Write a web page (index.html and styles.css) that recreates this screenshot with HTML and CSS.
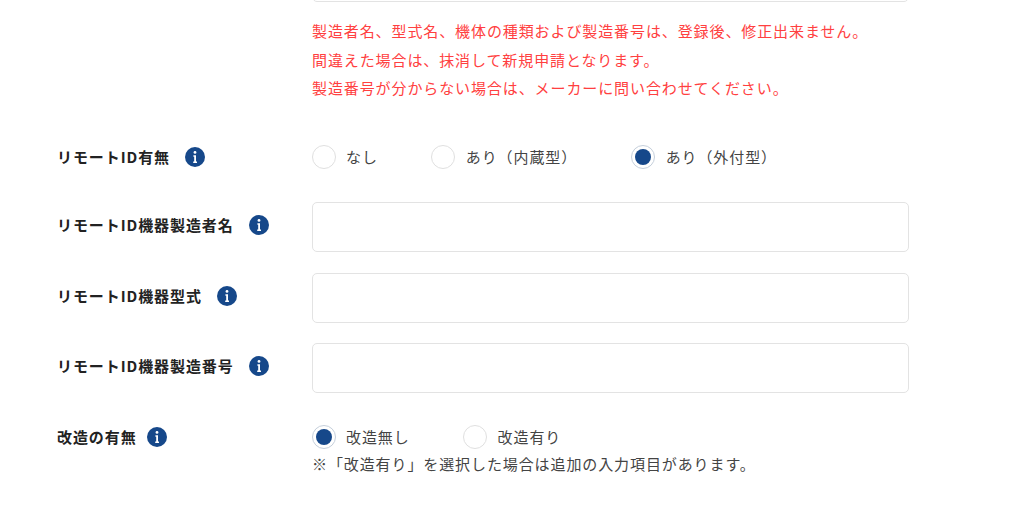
FILE: index.html
```html
<!DOCTYPE html>
<html lang="ja">
<head>
  <meta charset="UTF-8" />
  <title>機体情報</title>
  <link rel="stylesheet" href="styles.css">
</head>
<body>
  <form class="form">
    <div class="row row-top">
      <div class="label"></div>
      <div class="field">
        <input type="text" class="text-input" />
        <div class="notice">
          <p>製造者名、型式名、機体の種類および製造番号は、登録後、修正出来ません。</p>
          <p>間違えた場合は、抹消して新規申請となります。</p>
          <p>製造番号が分からない場合は、メーカーに問い合わせてください。</p>
        </div>
      </div>
    </div>

    <div class="row row-radio">
      <div class="label">
        <span>リモートID有無</span>
        <svg class="info" viewBox="0 0 20 20"><circle cx="10" cy="10" r="10" fill="#16488a"/><circle cx="10" cy="5.4" r="1.4" fill="#fff"/><path d="M8.4 8.3h2.6v6.2h1v1.5H8.2v-1.5h1v-4.7h-.8z" fill="#fff"/></svg>
      </div>
      <div class="field radios">
        <label class="radio radio-a"><span class="dot"></span>なし</label>
        <label class="radio radio-b"><span class="dot"></span>あり（内蔵型）</label>
        <label class="radio"><span class="dot checked"></span>あり（外付型）</label>
      </div>
    </div>

    <div class="row row-wide">
      <div class="label">
        <span>リモートID機器製造者名</span>
        <svg class="info" viewBox="0 0 20 20"><circle cx="10" cy="10" r="10" fill="#16488a"/><circle cx="10" cy="5.4" r="1.4" fill="#fff"/><path d="M8.4 8.3h2.6v6.2h1v1.5H8.2v-1.5h1v-4.7h-.8z" fill="#fff"/></svg>
      </div>
      <div class="field"><input type="text" class="text-input" /></div>
    </div>

    <div class="row">
      <div class="label">
        <span>リモートID機器型式</span>
        <svg class="info" viewBox="0 0 20 20"><circle cx="10" cy="10" r="10" fill="#16488a"/><circle cx="10" cy="5.4" r="1.4" fill="#fff"/><path d="M8.4 8.3h2.6v6.2h1v1.5H8.2v-1.5h1v-4.7h-.8z" fill="#fff"/></svg>
      </div>
      <div class="field"><input type="text" class="text-input" /></div>
    </div>

    <div class="row row-gap">
      <div class="label">
        <span>リモートID機器製造番号</span>
        <svg class="info" viewBox="0 0 20 20"><circle cx="10" cy="10" r="10" fill="#16488a"/><circle cx="10" cy="5.4" r="1.4" fill="#fff"/><path d="M8.4 8.3h2.6v6.2h1v1.5H8.2v-1.5h1v-4.7h-.8z" fill="#fff"/></svg>
      </div>
      <div class="field"><input type="text" class="text-input" /></div>
    </div>

    <div class="row row-radio row-last">
      <div class="label label-short">
        <span>改造の有無</span>
        <svg class="info" viewBox="0 0 20 20"><circle cx="10" cy="10" r="10" fill="#16488a"/><circle cx="10" cy="5.4" r="1.4" fill="#fff"/><path d="M8.4 8.3h2.6v6.2h1v1.5H8.2v-1.5h1v-4.7h-.8z" fill="#fff"/></svg>
      </div>
      <div class="field">
        <div class="radios">
          <label class="radio radio-c"><span class="dot checked"></span>改造無し</label>
          <label class="radio"><span class="dot"></span>改造有り</label>
        </div>
        <p class="note">※「改造有り」を選択した場合は追加の入力項目があります。</p>
      </div>
    </div>
  </form>
</body>
</html>
```

FILE: styles.css
```css
html, body {
  height: 515px;
  overflow: hidden;
}

body {
  margin: 0;
  background-color: #fff;
  color: #444;
  font-family: "Noto Sans CJK JP", "Noto Sans", sans-serif;
  font-size: 15px;
  letter-spacing: 0.9px;
}

p {
  margin: 0;
}

.form {
  width: 909px;
  margin-top: -48px;
  padding-left: 57px;
  box-sizing: border-box;
}

.row {
  display: flex;
  align-items: flex-start;
  margin-bottom: 20px;
}

.row-wide {
  margin-bottom: 21px;
}

.row-top {
  margin-bottom: 42px;
}

.row-radio {
  margin-bottom: 33px;
}

.row-gap {
  margin-bottom: 32px;
}

.row-last {
  margin-bottom: 0;
}

.label {
  width: 255px;
  flex-shrink: 0;
  display: flex;
  align-items: center;
  gap: 15px;
  height: 46px;
  font-size: 15px;
  font-weight: 700;
  color: #222;
  letter-spacing: 0.92px;
}

.label-short {
  gap: 10px;
}

.row-radio .label {
  height: 24px;
}

.info {
  width: 20px;
  height: 20px;
}

.field {
  flex: 1;
}

.text-input {
  display: block;
  width: 100%;
  height: 50px;
  box-sizing: border-box;
  border: 1px solid #e3e3e3;
  border-radius: 5px;
  background-color: #fff;
}

.notice {
  margin-top: 15px;
  color: #ff4040;
  line-height: 28.5px;
}

.radios {
  display: flex;
}

.radio {
  display: flex;
  align-items: center;
  gap: 10.5px;
  height: 24px;
}

.radio-a {
  gap: 10px;
  margin-right: 53.5px;
}

.radio-b {
  margin-right: 54px;
}

.radio-c {
  gap: 10px;
  margin-right: 53.5px;
}

.dot {
  width: 22px;
  height: 22px;
  border: 1px solid #e0e0e0;
  border-radius: 50%;
  background-color: #fff;
  position: relative;
}

.dot.checked {
  border-color: #c5cfdb;
}

.dot.checked::after {
  content: "";
  position: absolute;
  top: 3px;
  left: 3px;
  width: 16px;
  height: 16px;
  border-radius: 50%;
  background-color: #16488a;
}

.note {
  margin-top: 3px;
  line-height: 24px;
}
```
